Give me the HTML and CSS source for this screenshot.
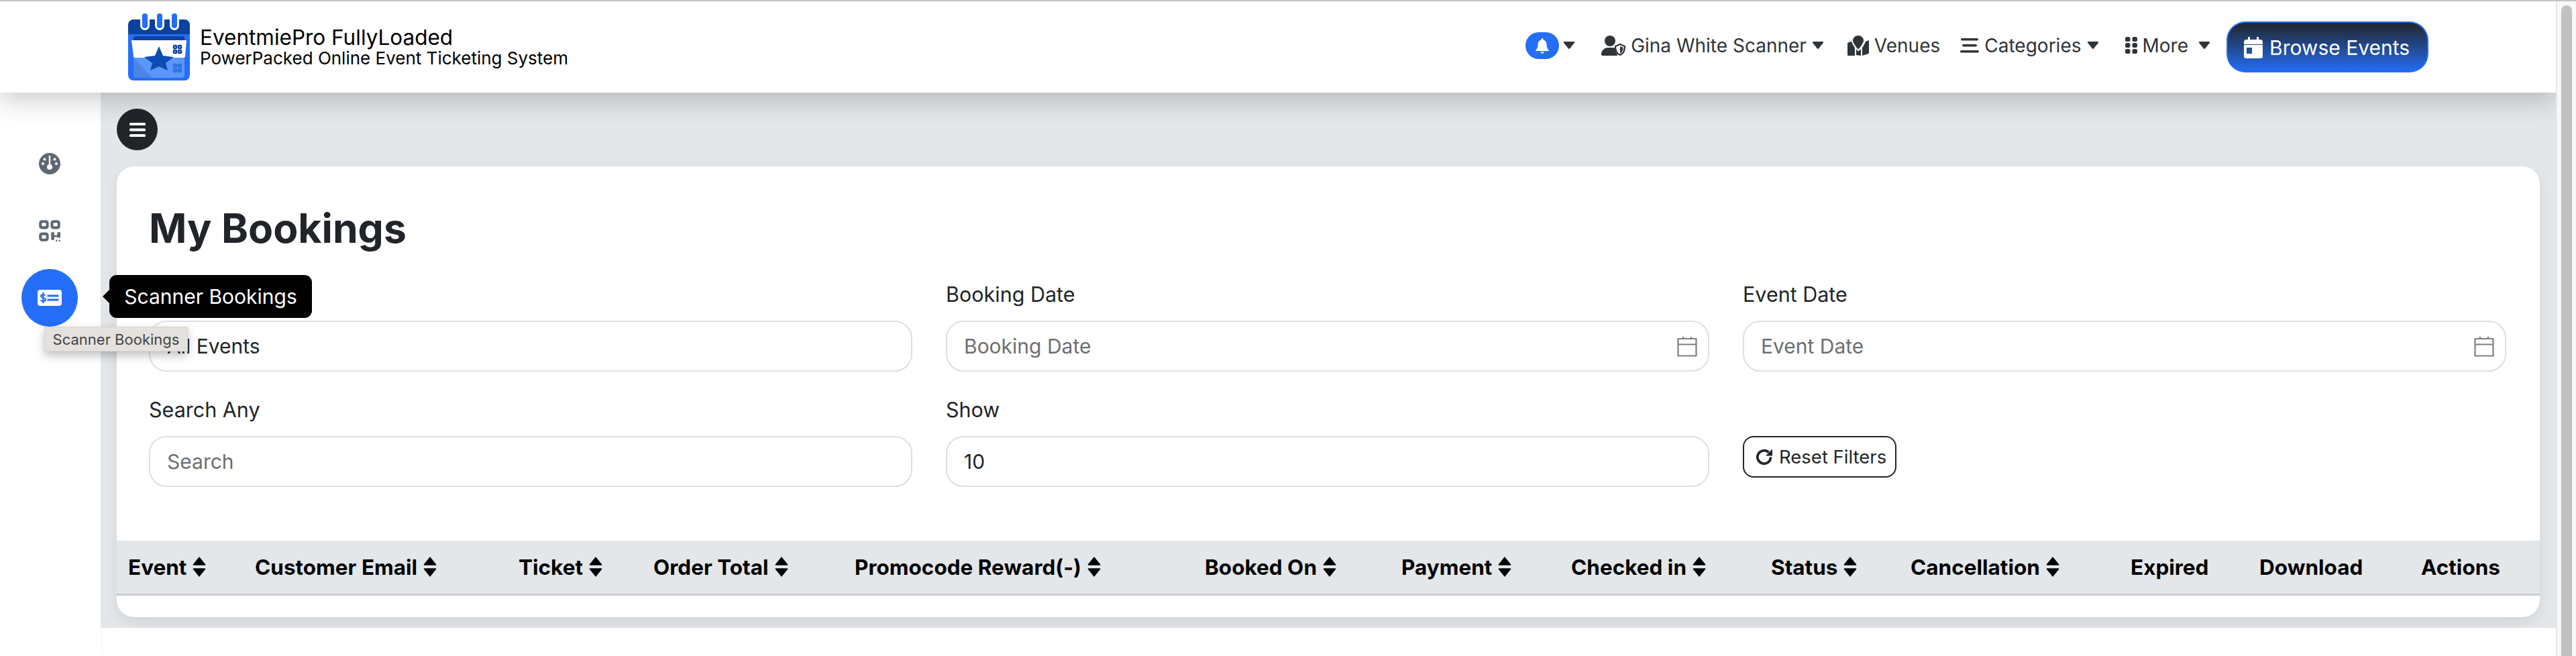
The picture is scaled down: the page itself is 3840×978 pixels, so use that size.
FILE: index.html
```html
<!DOCTYPE html>
<html lang="en">
<head>
  <meta charset="UTF-8">
  <meta name="viewport" content="width=device-width, initial-scale=1.0">
  <title>My Bookings</title>
  <link rel="stylesheet" href="styles.css">
</head>
<body>

<svg class="sprites" aria-hidden="true">
  <symbol id="caret" viewBox="0 0 18 12"><path d="M1.5 0h15c1.2 0 1.8 1.4 1 2.3L10 11.4c-.5.7-1.500.7-2 0L.500 2.300C-.3 1.400.3 0 1.500 0z"/></symbol>
  <symbol id="sort" viewBox="0 0 20 28"><path d="M10 0l8.500 10.500c.6.8.1 1.500-.8 1.500H2.300c-.9 0-1.400-.7-.8-1.500zM10 28L1.500 17.500c-.6-.8-.1-1.500.8-1.500h15.400c.9 0 1.400.7.8 1.500z"/></symbol>
  <symbol id="cal-line" viewBox="0 0 30 30"><path fill="none" stroke="currentColor" stroke-width="2.200" d="M1.500 3h27v25.500h-27zM1.500 11.500h27M9 0v3M21 0v3"/></symbol>
</svg>

<div class="page">
  <header class="topbar">
    <a class="brand" href="#">
      <svg class="brand-logo" viewBox="0 0 92 100">
        <path fill="#0a429f" d="M8 9h76a8 8 0 0 1 8 8v18H0V17a8 8 0 0 1 8-8z"/>
        <path fill="#246ef9" d="M0 31h92v61a8 8 0 0 1-8 8H8a8 8 0 0 1-8-8z"/>
        <path fill="#0a429f" d="M12 34h68a4 4 0 0 1 4 4v4H8v-4a4 4 0 0 1 4-4z"/>
        <rect x="8" y="62" width="76" height="34" rx="4" fill="#5c96fa"/>
        <path fill="#4d84e6" d="M8 66l28 30H12a4 4 0 0 1-4-4z"/>
        <path fill="#fff" d="M5 40h82l-2 24c0 1-1 2-2 2H10c-1 0-2-1-2-2z"/>
        <g fill="#fff">
          <rect x="18" y="0" width="14" height="25" rx="7"/>
          <rect x="40" y="0" width="14" height="25" rx="7"/>
          <rect x="62" y="0" width="14" height="25" rx="7"/>
        </g>
        <g fill="#246ef9">
          <rect x="21" y="0" width="8" height="22" rx="4"/>
          <rect x="43" y="0" width="8" height="22" rx="4"/>
          <rect x="65" y="0" width="8" height="22" rx="4"/>
        </g>
        <path fill="#0d4cb4" d="M46 49l6 14 16 2-12 9 3 11-13-6-13 6 3-11-12-9 16-2z"/>
        <g fill="none" stroke="#0a429f" stroke-width="2.500">
          <rect x="68" y="48" width="4" height="4" rx="1"/><rect x="75" y="48" width="4" height="4" rx="1"/>
          <rect x="68" y="55" width="4" height="4" rx="1"/><rect x="75" y="55" width="4" height="4" rx="1"/>
        </g>
        <g fill="none" stroke="#2c6fe0" stroke-width="2.500">
          <rect x="68" y="76" width="4" height="4" rx="1"/><rect x="75" y="76" width="4" height="4" rx="1"/>
          <rect x="68" y="83" width="4" height="4" rx="1"/><rect x="75" y="83" width="4" height="4" rx="1"/>
        </g>
      </svg>
      <span class="brand-text">
        <span class="brand-name">EventmiePro FullyLoaded</span>
        <span class="brand-tag">PowerPacked Online Event Ticketing System</span>
      </span>
    </a>

    <nav class="nav">
      <a class="nav-item nav-bell" href="#">
        <span class="bell-pill">
          <svg class="bell-icon" viewBox="0 0 24 24"><path d="M12 1a1.600 1.600 0 0 0-1.600 1.600v1C7.400 4.300 5.500 7 5.500 10c0 4.500-1 6.500-3 8.500v1.500h19v-1.500c-2-2-3-4-3-8.500 0-3-1.900-5.700-4.900-6.400v-1A1.600 1.600 0 0 0 12 1zM9.500 21.200a2.500 2.500 0 0 0 5 0z"/></svg>
        </span>
        <svg class="caret"><use href="#caret"/></svg>
      </a>
      <a class="nav-item nav-user" href="#">
        <svg class="nav-icon icon-user" viewBox="0 0 36 30"><circle cx="13" cy="8" r="8"/><path d="M10 18h6c2 0 4 .4 5 1-.3 3.500 1 7 3.500 10-.3.500-1 1-1.500 1H2c-1 0-2-1-2-2 0-5.500 4.500-10 10-10z"/><path fill="none" stroke="currentColor" stroke-width="2.200" d="M28 13l7 3c0 6-2 11-7 13-5-2-7-7-7-13z"/><path d="M28 16l4.500 1.800c0 4-1.300 7.500-4.500 9z"/></svg>
        <span>Gina White Scanner</span>
        <svg class="caret"><use href="#caret"/></svg>
      </a>
      <a class="nav-item nav-venues" href="#">
        <svg class="nav-icon icon-map" viewBox="0 0 32 30"><path d="M16 0c4.500 0 8 3.300 8 7.500 0 3.500-5 10-8 13-3-3-8-9.500-8-13C8 3.300 11.500 0 16 0z"/><path d="M0 11l6-2.500c1 3.500 3.500 7.500 5 9.500v12l-10 0c-.6 0-1-.5-1-1zM32 7v19c0 .5-.3.800-.7 1L22 30V18c2-2.500 4-6 4.800-9zM13 20l3 3.500 4-3.500v10l-7-1z"/></svg>
        <span>Venues</span>
      </a>
      <a class="nav-item nav-categories" href="#">
        <svg class="nav-icon icon-bars" viewBox="0 0 28 22"><rect x="1" y="0" width="26" height="3.500" rx="1.700"/><rect x="3" y="9" width="22" height="3.500" rx="1.700"/><rect x="0" y="18" width="28" height="3.500" rx="1.700"/></svg>
        <span>Categories</span>
        <svg class="caret"><use href="#caret"/></svg>
      </a>
      <a class="nav-item nav-more" href="#">
        <svg class="nav-icon icon-dots" viewBox="0 0 18 25"><rect width="7.500" height="7" rx="2.500"/><rect x="10.500" width="7.500" height="7" rx="2.500"/><rect y="9" width="7.500" height="7" rx="2.500"/><rect x="10.500" y="9" width="7.500" height="7" rx="2.500"/><rect y="18" width="7.500" height="7" rx="2.500"/><rect x="10.500" y="18" width="7.500" height="7" rx="2.500"/></svg>
        <span>More</span>
        <svg class="caret caret-wide"><use href="#caret"/></svg>
      </a>
      <a class="browse-btn" href="#">
        <svg class="browse-icon" viewBox="0 0 28 32"><path d="M6 0h3v4h10V0h3v4h2a4 4 0 0 1 4 4v3H0V8a4 4 0 0 1 4-4h2zM0 12h28v17a3 3 0 0 1-3 3H3a3 3 0 0 1-3-3zm4 4v9h8v-9z"/></svg>
        <span>Browse Events</span>
      </a>
    </nav>
  </header>

  <div class="layout">
    <aside class="sidebar">
      <a class="side-item" href="#">
        <svg class="side-icon" viewBox="0 0 32 32"><circle cx="16" cy="16" r="16" fill="#5f6872"/><g fill="#fff"><rect x="14.800" y="4" width="2.400" height="16"/><circle cx="16" cy="21" r="4"/><circle cx="8.500" cy="9.500" r="2"/><circle cx="23.500" cy="9.500" r="2"/><circle cx="6" cy="16" r="2"/><circle cx="26" cy="16" r="2"/></g></svg>
      </a>
      <a class="side-item" href="#">
        <svg class="side-icon" viewBox="0 0 28 28"><g fill="none" stroke="#5f6872" stroke-width="3.600"><rect x="2" y="2" width="9" height="8" rx="2"/><rect x="17" y="2" width="9" height="8" rx="2"/><rect x="2" y="18" width="9" height="8" rx="2"/></g><path fill="#5f6872" d="M16 16h4v4h4v-4h4v7h-4v-1h-4v4h-4zM22 26h2v2h-2zM26 26h2v2h-2z"/></svg>
      </a>
      <div class="side-item side-item-active">
        <a class="side-circle" href="#">
          <svg class="card-icon" viewBox="0 0 36 24"><rect width="36" height="24" rx="4" fill="#fff"/><path fill="#246ef9" d="M14.500 7.500h17v3h-17zM14.500 13.500h17v3h-17z"/><path fill="none" stroke="#246ef9" stroke-width="2.200" d="M11.500 8.500c-1-1.600-6.500-1.800-6.500 1 0 3 6.800 2 6.800 5.200 0 2.900-6 2.900-7.300.8M8.300 4v16"/></svg>
        </a>
        <div class="side-tip">Scanner Bookings</div>
        <div class="native-tip">Scanner Bookings</div>
      </div>
    </aside>

    <div class="main">
      <main class="content">
        <button class="menu-toggle" type="button" aria-label="Toggle menu">
          <svg class="menu-icon" viewBox="0 0 24 21"><rect width="24" height="4" rx="1.500"/><rect y="8.500" width="24" height="4" rx="1.500"/><rect y="17" width="24" height="4" rx="1.500"/></svg>
        </button>

        <section class="card">
          <h1 class="card-title">My Bookings</h1>

          <!-- Filters -->
          <div class="filters">
            <div class="field">
              <label class="field-label">Event</label>
              <select class="field-input"><option>All Events</option></select>
            </div>
            <div class="field">
              <label class="field-label">Booking Date</label>
              <div class="date-wrap">
                <input class="field-input" type="text" placeholder="Booking Date">
                <svg class="date-icon"><use href="#cal-line"/></svg>
              </div>
            </div>
            <div class="field">
              <label class="field-label">Event Date</label>
              <div class="date-wrap">
                <input class="field-input" type="text" placeholder="Event Date">
                <svg class="date-icon"><use href="#cal-line"/></svg>
              </div>
            </div>
            <div class="field">
              <label class="field-label">Search Any</label>
              <input class="field-input" type="text" placeholder="Search">
            </div>
            <div class="field">
              <label class="field-label">Show</label>
              <select class="field-input"><option>10</option></select>
            </div>
            <div class="field field-reset">
              <button class="reset-btn" type="button">
                <svg class="reset-icon" viewBox="0 0 26 26"><path fill="none" stroke="currentColor" stroke-width="3.800" d="M22.500 13.500a9.800 9.800 0 1 1-3-7.100"/><path d="M25 1.500v10h-10z"/></svg>
                <span>Reset Filters</span>
              </button>
            </div>
          </div>

          <!-- Bookings table header, no rows for this user -->
          <div class="table-head">
            <div class="th">Event <svg class="sort"><use href="#sort"/></svg></div>
            <div class="th">Customer Email <svg class="sort"><use href="#sort"/></svg></div>
            <div class="th">Ticket <svg class="sort"><use href="#sort"/></svg></div>
            <div class="th">Order Total <svg class="sort"><use href="#sort"/></svg></div>
            <div class="th">Promocode Reward(-) <svg class="sort"><use href="#sort"/></svg></div>
            <div class="th">Booked On <svg class="sort"><use href="#sort"/></svg></div>
            <div class="th">Payment <svg class="sort"><use href="#sort"/></svg></div>
            <div class="th">Checked in <svg class="sort"><use href="#sort"/></svg></div>
            <div class="th">Status <svg class="sort"><use href="#sort"/></svg></div>
            <div class="th">Cancellation <svg class="sort"><use href="#sort"/></svg></div>
            <div class="th">Expired</div>
            <div class="th">Download</div>
            <div class="th">Actions</div>
          </div>
          <div class="table-body"></div>
        </section>
      </main>
    </div>
  </div>
</div>

<div class="scrollbar"><div class="scroll-thumb"></div></div>

</body>
</html>
```

FILE: styles.css
```css
* {
  box-sizing: border-box;
}
html, body {
  height: 100%;
}
body {
  margin: 0;
  display: flex;
  height: 978px;
  overflow: hidden;
  border-top: 2px solid #c4c4c4;
  font-family: Inter, "Liberation Sans", sans-serif;
  color: #212529;
  background-color: #fff;
}
a {
  color: inherit;
  text-decoration: none;
}
.sprites {
  display: none;
}

/* Page frame */
.page {
  flex: 1;
  min-width: 0;
  display: flex;
  flex-direction: column;
  overflow: hidden;
}
.scrollbar {
  width: 30px;
  padding: 6px 6px 0 6px;
  background-color: #f8f8f8;
  border-left: 2px solid #e8e8e8;
}
.scroll-thumb {
  height: 100%;
  background-color: #c1c1c1;
  border-radius: 8px 8px 0 0;
}

/* Top bar */
.topbar {
  position: relative;
  z-index: 3;
  height: 136px;
  flex-shrink: 0;
  display: flex;
  align-items: center;
  justify-content: space-between;
  padding: 0 190px 0 191px;
  background-color: #fff;
  box-shadow: 0 12px 36px rgba(0, 0, 0, 0.2);
}
.brand {
  display: flex;
  align-items: center;
  gap: 15px;
  color: #000;
}
.brand-logo {
  width: 92px;
  height: 100px;
}
.brand-text {
  display: flex;
  flex-direction: column;
}
.brand-name {
  font-size: 31.5px;
  line-height: 34px;
}
.brand-tag {
  font-size: 26px;
  line-height: 28px;
}
.nav {
  display: flex;
  align-items: center;
  font-size: 28px;
  color: #2f3439;
}
.nav-item {
  display: flex;
  align-items: center;
  margin-right: 39px;
  margin-bottom: 5px;
  gap: 8px;
  fill: currentColor;
}
.nav-bell {
  gap: 6px;
}
.nav-user {
  margin-right: 35px;
}
.nav-venues {
  margin-right: 30px;
}
.nav-more {
  margin-right: 24px;
}
.bell-pill {
  width: 50px;
  height: 40px;
  display: flex;
  align-items: center;
  justify-content: center;
  background-color: #246ef9;
  border-radius: 20px;
}
.bell-icon {
  width: 24px;
  height: 24px;
  fill: #fff;
}
.caret {
  width: 18px;
  height: 11px;
}
.caret-wide {
  margin-left: 7px;
}
.nav-icon {
  flex-shrink: 0;
}
.icon-user {
  width: 36px;
  height: 30px;
}
.icon-map {
  width: 32px;
  height: 30px;
}
.icon-bars {
  width: 28px;
  height: 22px;
}
.icon-dots {
  width: 18px;
  height: 25px;
}
.browse-btn {
  display: flex;
  align-items: center;
  gap: 10px;
  width: 301px;
  height: 76px;
  padding: 0 24px;
  color: #fff;
  font-size: 30px;
  border: 2px solid #246ef9;
  border-bottom: 0;
  border-radius: 28px;
  background: linear-gradient(180deg, #212529 0%, #246ef9 100%);
}
.browse-icon {
  width: 28px;
  height: 32px;
  fill: #fff;
}

/* Layout under the top bar */
.layout {
  flex: 1;
  display: flex;
  min-height: 0;
}
.sidebar {
  width: 150px;
  flex-shrink: 0;
  padding: 56px 2px 0 0;
  background-color: #fff;
  box-shadow: 2px 0 6px rgba(0, 0, 0, 0.03);
}
.side-item {
  position: relative;
  z-index: 2;
  height: 100px;
  display: flex;
  align-items: center;
  justify-content: center;
}
.side-icon {
  width: 32px;
  height: 32px;
}
.side-circle {
  width: 84px;
  height: 86px;
  display: flex;
  align-items: center;
  justify-content: center;
  background-color: #246ef9;
  border-radius: 50%;
}
.card-icon {
  width: 36px;
  height: 24px;
}
.side-tip {
  position: absolute;
  top: 16px;
  left: 163px;
  width: 302px;
  height: 64px;
  display: flex;
  align-items: center;
  justify-content: center;
  color: #fff;
  font-size: 30px;
  white-space: nowrap;
  background-color: #000;
  border-radius: 11px;
}
.side-tip::before {
  content: "";
  position: absolute;
  left: -10px;
  top: 22px;
  border-top: 10px solid transparent;
  border-bottom: 10px solid transparent;
  border-right: 10px solid #000;
}
.native-tip {
  position: absolute;
  top: 93px;
  left: 66px;
  width: 214px;
  height: 37px;
  display: flex;
  align-items: center;
  justify-content: center;
  color: #444;
  font-size: 22px;
  white-space: nowrap;
  background-color: #e5e2de;
  border: 1px solid #d6d3cf;
  box-shadow: 0 6px 14px rgba(0, 0, 0, 0.25);
}
.main {
  flex: 1;
  min-width: 0;
}
.content {
  padding: 24px 24px 16px;
  background-color: #e4e7ea;
}
.menu-toggle {
  display: flex;
  align-items: center;
  justify-content: center;
  width: 61px;
  height: 62px;
  padding: 0;
  margin-bottom: 24px;
  border: 0;
  border-radius: 50%;
  background-color: #212529;
}
.menu-icon {
  width: 24px;
  height: 21px;
  fill: #fff;
}

/* Card */
.card {
  height: 672px;
  padding-top: 55px;
  background-color: #fff;
  border-radius: 26px;
  overflow: hidden;
  box-shadow: 0 8px 20px rgba(0, 0, 0, 0.08);
}
.card-title {
  margin: 0 0 39px 48px;
  font-size: 60.6px;
  line-height: 74px;
  font-weight: 700;
}
.filters {
  display: grid;
  grid-template-columns: repeat(3, 1138px);
  column-gap: 50px;
  row-gap: 34px;
  padding-left: 48px;
}
.field-label {
  display: block;
  margin-bottom: 17px;
  font-size: 30.5px;
  line-height: 45px;
}
.field-input {
  display: block;
  width: 100%;
  height: 76px;
  padding: 0 25px;
  font-family: inherit;
  font-size: 30px;
  color: #212529;
  background-color: #fff;
  border: 2px solid #dcdfe4;
  border-radius: 26px;
  appearance: none;
  -webkit-appearance: none;
}
.field-input::placeholder {
  color: #6c6f73;
}
.date-wrap {
  position: relative;
}
.date-icon {
  position: absolute;
  top: 24px;
  right: 18px;
  width: 30px;
  height: 30px;
  color: #808080;
}
.field-reset {
  padding-top: 62px;
}
.reset-btn {
  display: flex;
  align-items: center;
  gap: 9px;
  width: 229px;
  height: 62px;
  padding: 0 0 0 17px;
  font-family: inherit;
  font-size: 27.5px;
  white-space: nowrap;
  color: #212529;
  background-color: #fff;
  border: 2px solid #212529;
  border-radius: 16px;
}
.reset-icon {
  width: 26px;
  height: 26px;
  flex-shrink: 0;
  fill: currentColor;
}

/* Table header */
.table-head {
  display: grid;
  grid-template-columns: 189px 393px 201px 300px 522px 293px 253px 298px 208px 328px 192px 241px 194px;
  height: 82px;
  margin-top: 80px;
  align-items: center;
  background-color: #e4e7ea;
  border-bottom: 3px solid #c9ccd0;
}
.th {
  display: flex;
  align-items: center;
  gap: 8px;
  padding-left: 17px;
  font-size: 31.5px;
  font-weight: 700;
  color: #000;
  white-space: nowrap;
}
.sort {
  width: 22px;
  height: 30px;
  margin-top: -2px;
}
```
